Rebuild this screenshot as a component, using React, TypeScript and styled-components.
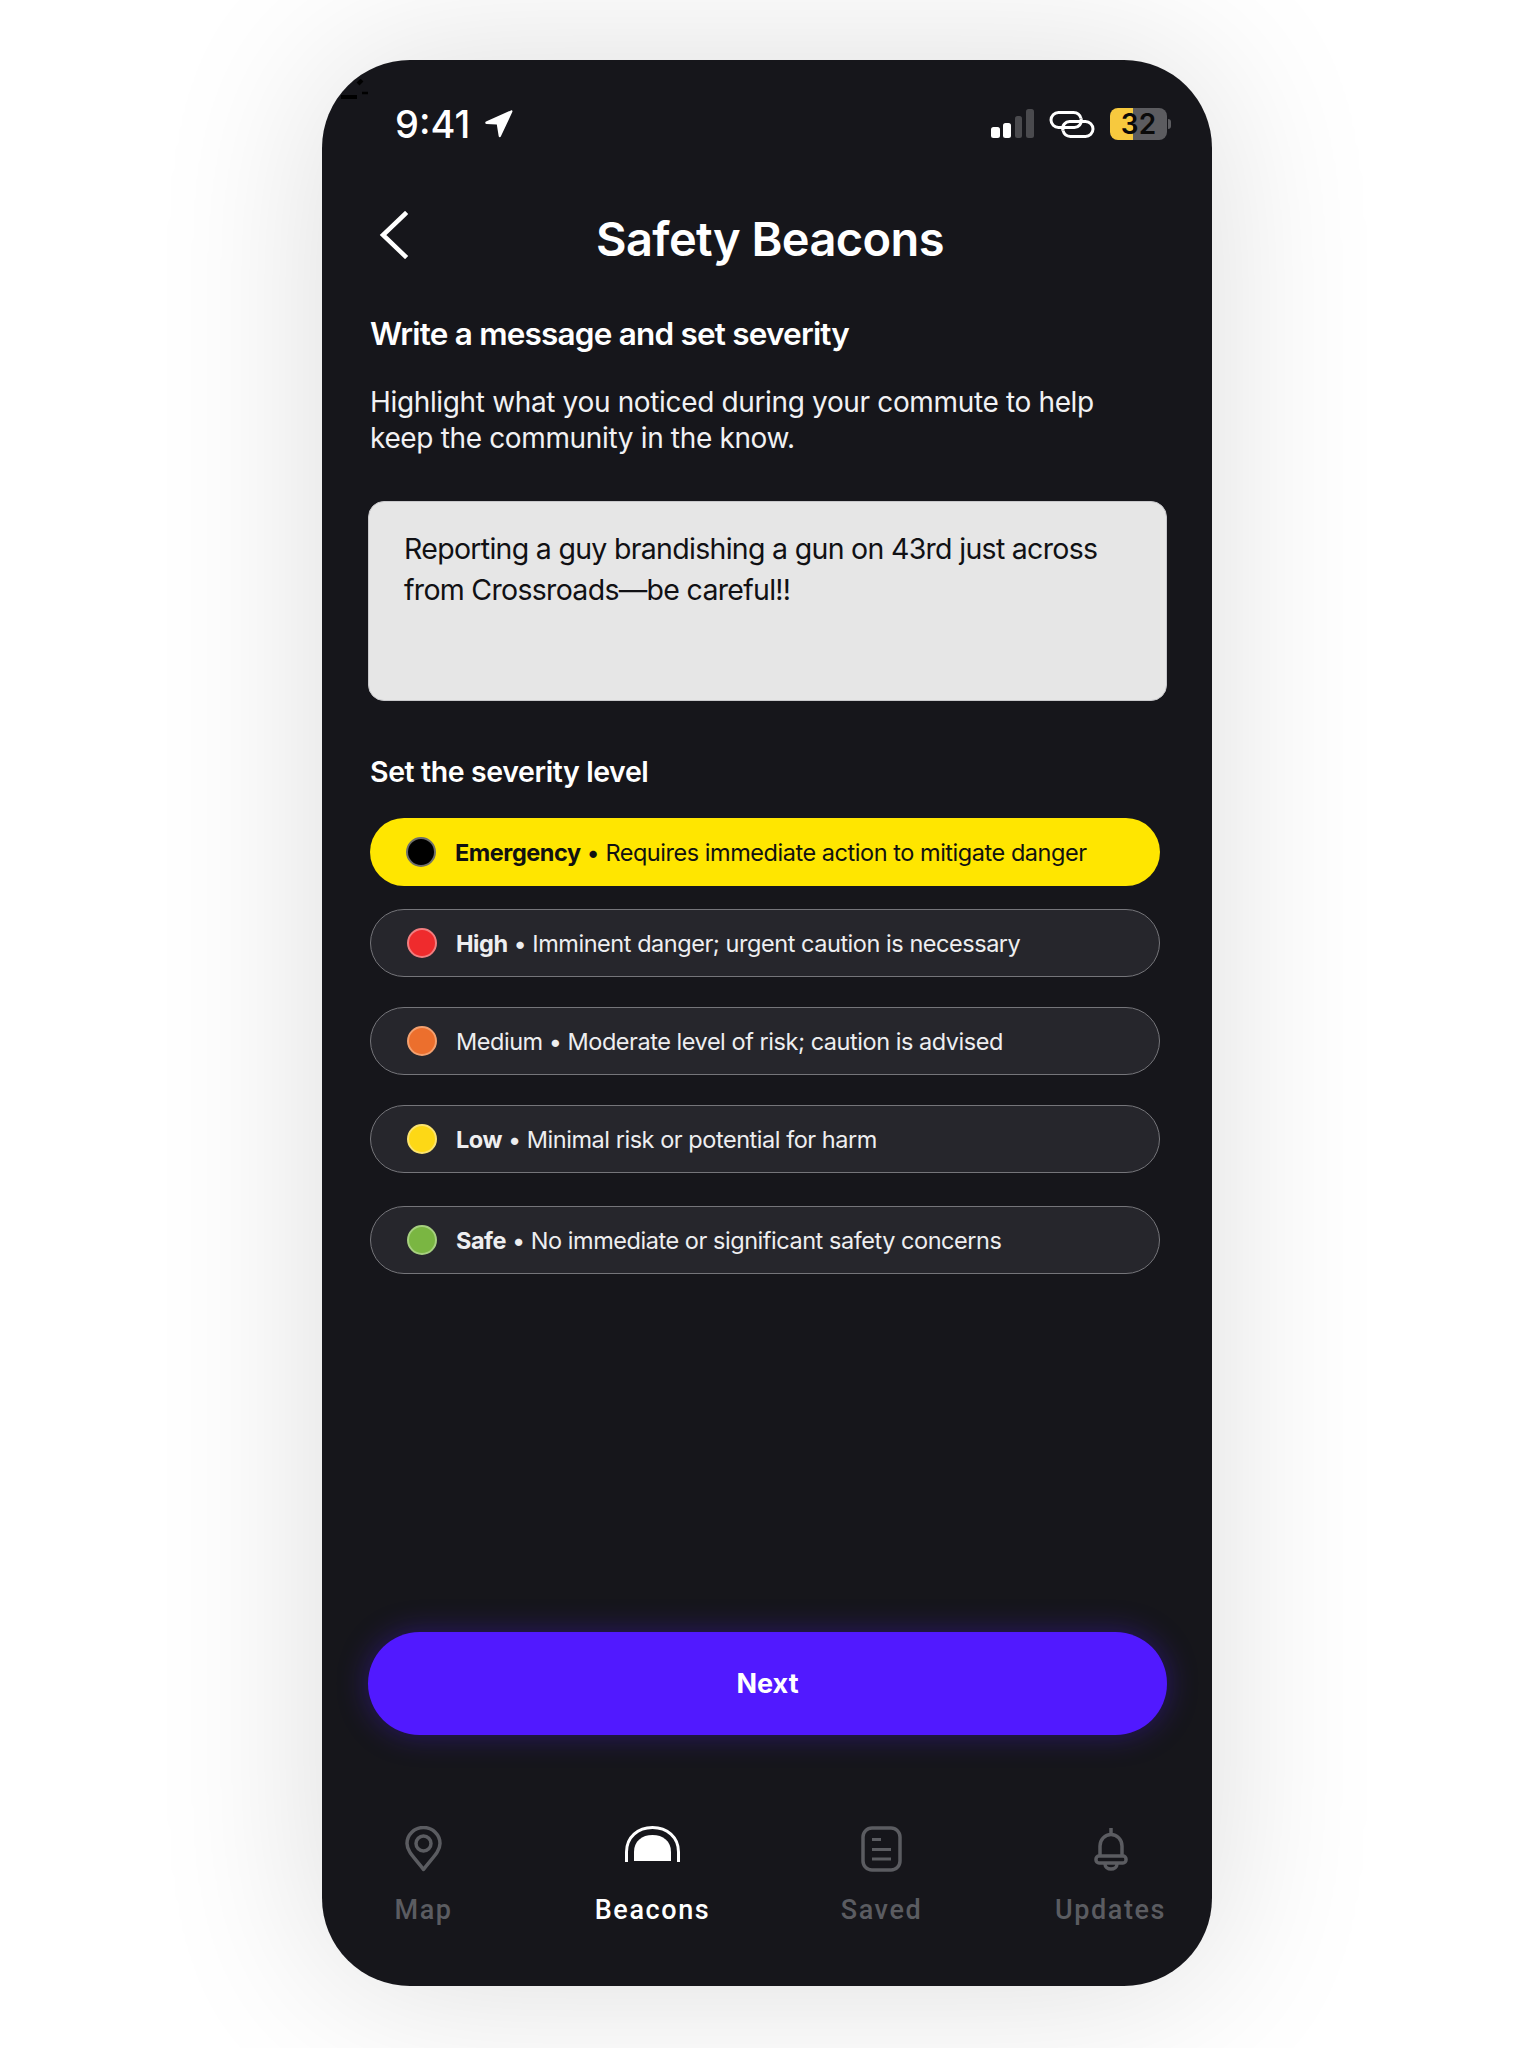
import styled, { createGlobalStyle } from "styled-components"

const levels = [
  { name: "Emergency", text: "Requires immediate action to mitigate danger", dot: "#000000", ring: "#6f6f6a", bold: true, active: true, gap: 0 },
  { name: "High", text: "Imminent danger; urgent caution is necessary", dot: "#ef2b2d", ring: "#f27d7f", bold: true, active: false, gap: 23 },
  { name: "Medium", text: "Moderate level of risk; caution is advised", dot: "#ec6f2d", ring: "#f3a06f", bold: false, active: false, gap: 30 },
  { name: "Low", text: "Minimal risk or potential for harm", dot: "#fdd816", ring: "#fbe36f", bold: true, active: false, gap: 30 },
  { name: "Safe", text: "No immediate or significant safety concerns", dot: "#7ab642", ring: "#a6d07f", bold: true, active: false, gap: 33 },
]

export default function App() {
  return <Page>
    <GlobalStyle/>
    <Phone>
      <Specks viewBox="0 0 28 21">
        <path d="M0 18h16" stroke="#000" strokeWidth="4"/>
        <path d="M21 14h6" stroke="#000" strokeWidth="2.500"/>
        <path d="M17 5l4-4" stroke="#000" strokeWidth="4"/>
      </Specks>
      <StatusBar>
        <TimeGroup>
          <Time>9:41</Time>
          <svg width="28" height="28" viewBox="0 0 28 28"><path d="M1 11.500 26 .4c.9-.4 1.800.5 1.400 1.400L15.800 26.600c-.5 1-1.900.8-2.100-.3L11.800 14.600 1.400 13.900c-1.300-.1-1.600-1.800-.4-2.400z" fill="#fff"/></svg>
        </TimeGroup>
        <StatusIcons>
          <svg width="43" height="30" viewBox="0 0 43 30">
            <rect x="0" y="18" width="9" height="11" rx="2.500" fill="#fff"/>
            <rect x="12" y="14" width="8" height="15" rx="2.500" fill="#fff"/>
            <rect x="24" y="7" width="7" height="22" rx="2.500" fill="#4a4a4e"/>
            <rect x="35" y="0" width="8" height="29" rx="2.500" fill="#4a4a4e"/>
          </svg>
          <svg width="46" height="27" viewBox="0 0 46 27" fill="none" stroke="#fff" strokeWidth="3">
            <path d="M17 16.500H9.500a7.500 7.500 0 0 1 0-15h15a8 8 0 0 1 7.500 6"/>
            <path d="M28 10.500h8.500a7.500 7.500 0 0 1 0 15h-15a8 8 0 0 1-7.500-6"/>
            <path d="M14 19.500a7 7 0 0 1 7.500-9H28M32 7.500a7 7 0 0 1-7.500 9H17"/>
          </svg>
          <BatteryWrap>
            <Battery>32</Battery>
            <BatteryCap/>
          </BatteryWrap>
        </StatusIcons>
      </StatusBar>
      <Header>
        <BackButton>
          <svg width="30" height="48" viewBox="0 0 30 48" fill="none" stroke="#fff" strokeWidth="4.500" strokeLinecap="square"><path d="M26 3 4 24l22 21"/></svg>
        </BackButton>
        <Title>Safety Beacons</Title>
      </Header>
      <Content>
        <Heading>Write a message and set severity</Heading>
        <Description>Highlight what you noticed during your commute to help keep the community in the know.</Description>
        <MessageBox>Reporting a guy brandishing a gun on 43rd just across from Crossroads—be careful!!</MessageBox>
        <SectionLabel>Set the severity level</SectionLabel>
        <LevelList>
          {levels.map((item) => {
            return <LevelRow key={item.name} $active={item.active} $gap={item.gap}>
              <Dot $color={item.dot} $ring={item.ring}/>
              <LevelName $bold={item.bold}>{item.name}</LevelName>
              <Bullet>•</Bullet>
              <span>{item.text}</span>
            </LevelRow>
          })}
        </LevelList>
      </Content>
      <NextButton>Next</NextButton>
      <TabBar>
        <Tab>
          <TabIcon>
            <svg width="37" height="46" viewBox="0 0 37 46" fill="none" stroke="#5b5c61" strokeWidth="3.500"><path d="M18.500 43.500C11 33 2 26 2 17.500a16.500 16 0 0 1 33 0C35 26 26 33 18.500 43.500z" strokeLinejoin="round"/><circle cx="18.500" cy="17.500" r="7.500"/></svg>
          </TabIcon>
          <TabLabel>Map</TabLabel>
        </Tab>
        <Tab>
          <TabIcon>
            <svg width="55" height="36" viewBox="0 0 55 36" fill="none"><path d="M1.500 36V26C1.500 11 13 1.500 27.500 1.500S53.500 11 53.500 26v10" stroke="#fff" strokeWidth="3"/><path d="M9 35V26C9 15 17 9 27.500 9S46 15 46 26v9z" fill="#fff"/></svg>
          </TabIcon>
          <TabLabel $active>Beacons</TabLabel>
        </Tab>
        <Tab>
          <TabIcon>
            <svg width="41" height="46" viewBox="0 0 41 46" fill="none" stroke="#5b5c61" strokeWidth="3.500"><rect x="2" y="2" width="37" height="42" rx="9"/><path d="M11 13.500h9M11 23.500h19M11 33h19" strokeWidth="3"/></svg>
          </TabIcon>
          <TabLabel>Saved</TabLabel>
        </Tab>
        <Tab>
          <TabIcon>
            <svg width="34" height="46" viewBox="0 0 34 46" fill="none" stroke="#5b5c61" strokeWidth="3.500"><path d="M17 2v6M6 31V20a11 11.500 0 0 1 22 0v11"/><rect x="2" y="30" width="30" height="7" rx="3"/><path d="M11 38a6 5 0 0 0 12 0"/></svg>
          </TabIcon>
          <TabLabel>Updates</TabLabel>
        </Tab>
      </TabBar>
    </Phone>
  </Page>
}

const GlobalStyle = createGlobalStyle`
  body {
    margin:0;
    background:#fff;
    font-family:"Inter","Noto Sans",sans-serif;
  }
`
const Page = styled.div`
  width:1536px;
  height:2048px;
  padding:60px 324px 0 322px;
  box-sizing:border-box;
  overflow:hidden;
`
const Phone = styled.div`
  position:relative;
  width:890px;
  height:1926px;
  background:#16161b;
  border-radius:88px;
  box-shadow:0 0 170px rgba(0,0,0,0.14);
  display:flex;
  flex-direction:column;
  color:#fff;
`
const Specks = styled.svg`
  position:absolute;
  left:19px;
  top:19px;
  width:28px;
  height:21px;
`
const StatusBar = styled.div`
  display:flex;
  justify-content:space-between;
  align-items:center;
  height:42px;
  margin-top:43px;
  padding:0 41px 0 73px;
`
const TimeGroup = styled.div`
  display:flex;
  align-items:center;
  gap:15px;
`
const Time = styled.div`
  font-size:38px;
  font-weight:500;
  line-height:42px;
`
const StatusIcons = styled.div`
  display:flex;
  align-items:center;
  gap:15px;
`
const BatteryWrap = styled.div`
  display:flex;
  align-items:center;
  gap:1px;
`
const Battery = styled.div`
  width:57px;
  height:32px;
  border-radius:8px;
  background:linear-gradient(90deg,#f7c93e 0 40%,#5c5c60 40% 100%);
  color:#0a0a0a;
  font-size:28px;
  font-weight:600;
  line-height:32px;
  text-align:center;
`
const BatteryCap = styled.div`
  width:3px;
  height:10px;
  border-radius:0 3px 3px 0;
  background:#5c5c60;
`
const Header = styled.div`
  position:relative;
  display:flex;
  justify-content:center;
  margin-top:64px;
  height:60px;
  padding-left:6px;
`
const BackButton = styled.div`
  position:absolute;
  left:57px;
  top:2px;
`
const Title = styled.div`
  font-size:47px;
  font-weight:600;
  line-height:60px;
  letter-spacing:-0.6px;
`
const Content = styled.div`
  padding:0 48px;
  margin-top:43px;
  flex:1;
`
const Heading = styled.div`
  font-size:31.500px;
  font-weight:600;
  line-height:44px;
  letter-spacing:-0.8px;
  color:#fff;
`
const Description = styled.div`
  margin-top:28px;
  font-size:28px;
  line-height:36px;
  letter-spacing:-0.35px;
  color:#f1f1f3;
`
const MessageBox = styled.div`
  margin:45px 0 0 -2px;
  width:799px;
  height:200px;
  box-sizing:border-box;
  padding:26px 60px 0 35px;
  background:#e6e6e6;
  border:1.500px solid #c8c8cb;
  border-radius:16px;
  color:#111114;
  font-size:28.500px;
  line-height:41px;
  letter-spacing:-0.7px;
`
const SectionLabel = styled.div`
  margin-top:52px;
  font-size:28.500px;
  font-weight:600;
  line-height:38px;
  letter-spacing:-0.4px;
`
const LevelList = styled.div`
  margin-top:27px;
  width:790px;
  display:flex;
  flex-direction:column;
`
const LevelRow = styled.div<{$active:boolean,$gap:number}>`
  display:flex;
  align-items:center;
  height:68px;
  box-sizing:border-box;
  margin-top:${({$gap})=>$gap}px;
  padding-left:36px;
  border-radius:34px;
  font-size:23.500px;
  letter-spacing:-0.46px;
  border:${({$active})=>$active ? "none" : "1.5px solid #75757a"};
  background:${({$active})=>$active ? "#ffe600" : "#26262c"};
  color:${({$active})=>$active ? "#111" : "#eeeef0"};
`
const Dot = styled.div<{$color:string,$ring:string}>`
  width:30px;
  height:30px;
  box-sizing:border-box;
  border-radius:50%;
  background:${({$color})=>$color};
  border:2px solid ${({$ring})=>$ring};
  margin-right:19px;
  flex-shrink:0;
`
const LevelName = styled.span<{$bold:boolean}>`
  font-weight:${({$bold})=>$bold ? 700 : 400};
`
const Bullet = styled.span`
  margin:0 6px;
`
const NextButton = styled.div`
  margin:0 45px 0 46px;
  height:103px;
  border-radius:52px;
  background:#5119ff;
  display:flex;
  align-items:center;
  justify-content:center;
  font-size:27px;
  font-weight:700;
  box-shadow:0 0 30px rgba(81,25,255,0.35);
`
const TabBar = styled.div`
  display:grid;
  grid-template-columns:repeat(4,1fr);
  margin:91px 0 0 -13px;
  height:160px;
  width:916px;
`
const Tab = styled.div`
  display:flex;
  flex-direction:column;
  align-items:center;
`
const TabIcon = styled.div`
  height:46px;
  display:flex;
  align-items:flex-start;
  justify-content:center;
`
const TabLabel = styled.div<{$active?:boolean}>`
  margin-top:20px;
  font-family:"Roboto","Noto Sans",sans-serif;
  font-size:27px;
  font-weight:500;
  line-height:36px;
  letter-spacing:1.6px;
  color:${({$active})=>$active ? "#fff" : "#5b5c61"};
`
